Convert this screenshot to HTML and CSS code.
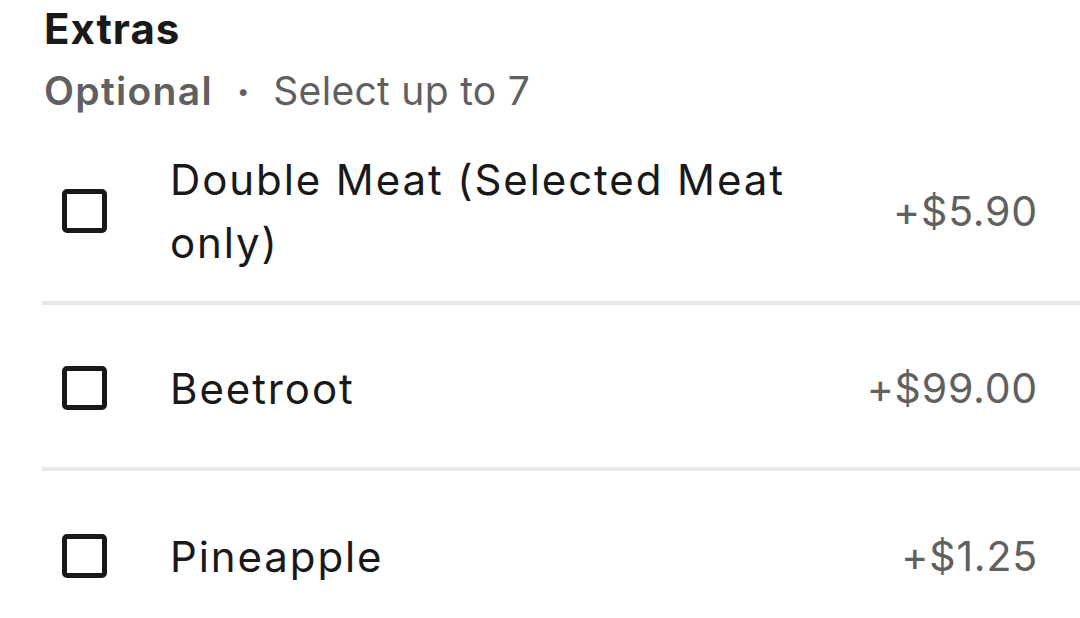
FILE: index.html
```html
<!DOCTYPE html>
<html lang="en">
<head>
<meta charset="utf-8">
<title>Extras</title>
<link rel="stylesheet" href="styles.css">
</head>
<body>
  <section class="option-group">
    <header class="group-head">
      <h2 class="group-title">Extras</h2>
      <p class="group-meta">
        <span class="meta-required">Optional</span>
        <span class="meta-dot">•</span>
        <span class="meta-limit">Select up to 7</span>
      </p>
    </header>

    <ul class="option-list">
      <li class="option-row">
        <span class="checkbox" role="checkbox" aria-checked="false"></span>
        <span class="option-name">Double Meat (Selected Meat only)</span>
        <span class="option-price">+$5.90</span>
      </li>
      <li class="option-row">
        <span class="checkbox" role="checkbox" aria-checked="false"></span>
        <span class="option-name">Beetroot</span>
        <span class="option-price">+$99.00</span>
      </li>
      <li class="option-row">
        <span class="checkbox" role="checkbox" aria-checked="false"></span>
        <span class="option-name">Pineapple</span>
        <span class="option-price">+$1.25</span>
      </li>
    </ul>
  </section>
</body>
</html>
```

FILE: styles.css
```css
html, body {
  margin: 0;
  padding: 0;
  background: #ffffff;
}

body {
  font-family: "Inter", "Liberation Sans", sans-serif;
  color: #191919;
  width: 1080px;
  height: 618px;
  overflow: hidden;
}

.option-group {
  padding-left: 42px;
}

.group-head {
  padding-left: 2px;
}

.group-title {
  margin: 0;
  padding-top: 3px;
  font-size: 42px;
  line-height: 52px;
  font-weight: 700;
  letter-spacing: 1px;
  color: #191919;
}

.group-meta {
  margin: 0;
  padding-top: 10px;
  display: flex;
  align-items: center;
  gap: 24px;
  font-size: 39px;
  line-height: 52px;
  color: #606060;
}

.meta-required {
  font-weight: 600;
  letter-spacing: 1.3px;
}

.meta-limit {
  letter-spacing: 0.3px;
}

.meta-dot {
  font-size: 22px;
}

.option-list {
  list-style: none;
  margin: 0;
  padding: 0;
}

.option-row {
  display: flex;
  align-items: center;
  min-height: 166px;
  padding: 31px 42px 27px 0;
  box-sizing: border-box;
  border-bottom: 4px solid #e9e9e9;
}

.option-row:last-child {
  border-bottom: none;
}

.checkbox {
  flex: none;
  width: 45px;
  height: 44px;
  margin-left: 20px;
  margin-right: 63px;
  border: 5px solid #191919;
  border-radius: 5px;
  box-sizing: border-box;
}

.option-name {
  flex: 1;
  font-size: 42px;
  line-height: 63px;
  letter-spacing: 1.9px;
  color: #191919;
  padding-right: 60px;
}

.option-price {
  flex: none;
  font-size: 41px;
  line-height: 63px;
  letter-spacing: 0.8px;
  color: #606060;
}
```
